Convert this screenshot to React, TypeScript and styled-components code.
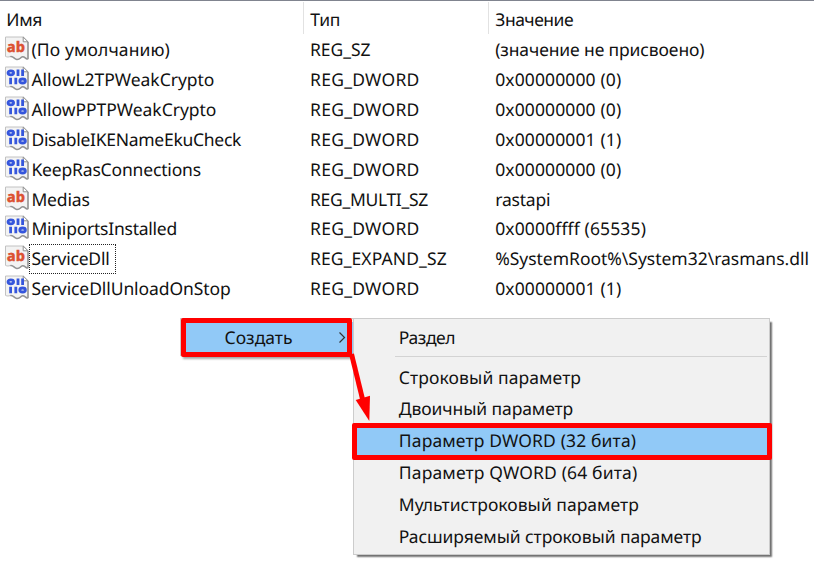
import React from 'react';
import styled, { createGlobalStyle } from 'styled-components';

const GlobalStyle = createGlobalStyle`
  * { box-sizing: border-box; }
  body {
    margin: 0;
    background: #fff;
    color: #111;
    font: 17.5px/24px "Noto Sans", "Open Sans", sans-serif;
    text-rendering: geometricPrecision;
  }
`;

const Window = styled.main`
  position: relative;
  width: 814px;
  height: 564px;
  overflow: hidden;
  background: #fff;
  border-top: 1px solid #80848f;
`;

const HeaderRow = styled.header`
  display: grid;
  grid-template-columns: 304px 185px 1fr;
  height: 33px;
  padding-top: 1px;
`;

const HeaderCell = styled.div`
  display: flex;
  align-items: center;
  padding: 3px 0 0 6.3px;
  border-right: 1px solid #e2e2e2;
  &:last-child { border-right: 0; }
`;

const List = styled.section`
  padding-top: 1.3px;
`;

const Row = styled.div`
  display: grid;
  grid-template-columns: 310px 185.2px 1fr;
  height: 29.88px;
  align-items: center;
`;

const NameCell = styled.div`
  display: flex;
  align-items: center;
  height: 29px;
  padding-left: 4px;
`;

const NameLabel = styled.div<{ $focused?: boolean }>`
  display: flex;
  align-items: center;
  height: 30px;
  padding: 0 5.5px 0 1.4px;
  border: 1px dotted ${(p) => (p.$focused ? '#222' : 'transparent')};
`;

const Label = styled.span<{ $ls: number }>`
  letter-spacing: ${(p) => p.$ls}px;
  white-space: pre;
`;

const IconSvg = styled.svg`
  flex: none;
  width: 25px;
  height: 25px;
  margin-top: -3px;
`;

const ParentMenu = styled.nav`
  position: absolute;
  left: 180px;
  top: 317px;
  width: 174px;
  height: 38px;
  padding-top: 3px;
  background: #f0f0f0;
  border: 1px solid #ccc;
  box-shadow: 3px 3px 2px rgba(0, 0, 0, 0.35);
`;

const ParentItem = styled.div`
  display: flex;
  align-items: center;
  justify-content: space-between;
  height: 32px;
  padding: 0 7px 0 43.5px;
  background: #91c9f7;
`;

const Submenu = styled.nav`
  position: absolute;
  left: 353px;
  top: 317px;
  width: 417px;
  height: 237px;
  padding: 3px 2px 4px 3px;
  background: #f1f1f1;
  border: 1px solid #ccc;
  box-shadow: 3px 3px 1.5px -1px rgba(0, 0, 0, 0.55);
  clip-path: inset(0 -6px -6px 0);
`;

const MenuItem = styled.div<{ $active?: boolean }>`
  display: flex;
  align-items: center;
  height: 31.85px;
  padding-left: 41.8px;
  background: ${(p) => (p.$active ? '#91c9f7' : 'transparent')};
`;

const Separator = styled.hr`
  height: 1px;
  margin: 2px 0 4.8px 37.5px;
  border: 0;
  background: #d3d3d3;
`;

const Highlight = styled.div<{ $x: number; $y: number; $w: number; $h: number }>`
  position: absolute;
  left: ${(p) => p.$x}px;
  top: ${(p) => p.$y}px;
  width: ${(p) => p.$w}px;
  height: ${(p) => p.$h}px;
  border: 5px solid #f00;
  border-radius: 2px;
`;

const Arrow = styled.svg`
  position: absolute;
  left: 344px;
  top: 349px;
`;

function ValueIcon({ kind }: { kind: 'text' | 'binary' }) {
  return (
    <IconSvg viewBox="0 0 25 25">
      <path
        d="M1.5 1H19.2L24 5.8V22.6C22 24.2 20.6 19.8 18.2 20.8C15.8 22 15.4 24 12.5 23.4C9.8 22.6 9.2 19.8 6.3 20.6C4.2 21 3.6 21.4 1.5 20.4Z"
        fill="#f3f3f3"
        stroke="#c2c2c2"
      />
      <path
        d="M24 5.8V22.6C22 24.2 20.6 19.8 18.2 20.8C15.8 22 15.4 24 12.5 23.4C9.8 22.6 9.2 19.8 6.3 20.6"
        fill="none"
        stroke="#949494"
        strokeWidth="1.5"
      />
      <path d="M19.2 1V5.8H24Z" fill="#fff" stroke="#8f8f8f" />
      {kind === 'text' ? (
        <text
          x="2.8"
          y="15.8"
          fill="#dc5233"
          stroke="#dc5233"
          strokeWidth="0.3"
          fontFamily="Noto Sans"
          fontWeight="800"
          fontSize="14.6"
          textLength="18.2"
          lengthAdjust="spacingAndGlyphs"
        >
          ab
        </text>
      ) : (
        <g fill="none" stroke="#3556dc" strokeWidth="2.8">
          <ellipse cx="6.8" cy="6.8" rx="2.8" ry="2" />
          <path d="M14 3.5V10.1M18.6 3.5V10.1M6.6 11.7V18.3M11.8 11.7V18.3" />
          <ellipse cx="18.6" cy="15" rx="2.8" ry="2" />
        </g>
      )}
    </IconSvg>
  );
}

type Text = [string, number];

interface RegistryValue {
  kind: 'text' | 'binary';
  name: Text;
  type: Text;
  data: Text;
  focused?: boolean;
}

const DWORD: Text = ['REG_DWORD', 0.28];

const values: RegistryValue[] = [
  { kind: 'text', name: ['(По умолчанию)', 0.12], type: ['REG_SZ', -0.03], data: ['(значение не присвоено)', -0.12] },
  { kind: 'binary', name: ['AllowL2TPWeakCrypto', -0.03], type: DWORD, data: ['0x00000000 (0)', 0.12] },
  { kind: 'binary', name: ['AllowPPTPWeakCrypto', -0.03], type: DWORD, data: ['0x00000000 (0)', 0.12] },
  { kind: 'binary', name: ['DisableIKENameEkuCheck', -0.28], type: DWORD, data: ['0x00000001 (1)', 0.12] },
  { kind: 'binary', name: ['KeepRasConnections', -0.17], type: DWORD, data: ['0x00000000 (0)', 0.12] },
  { kind: 'text', name: ['Medias', -0.15], type: ['REG_MULTI_SZ', -0.31], data: ['rastapi', -0.18] },
  { kind: 'binary', name: ['MiniportsInstalled', -0.24], type: DWORD, data: ['0x0000ffff (65535)', 0.13] },
  { kind: 'text', name: ['ServiceDll', -0.2], type: ['REG_EXPAND_SZ', 0.1], data: ['%SystemRoot%\\System32\\rasmans.dll', -0.02], focused: true },
  { kind: 'binary', name: ['ServiceDllUnloadOnStop', -0.09], type: DWORD, data: ['0x00000001 (1)', 0.12] },
];

const headers: Text[] = [['Имя', -0.33], ['Тип', -0.28], ['Значение', -0.5]];

const newItems: { text: Text; active?: boolean }[] = [
  { text: ['Строковый параметр', 0.09] },
  { text: ['Двоичный параметр', -0.1] },
  { text: ['Параметр DWORD (32 бита)', 0.14], active: true },
  { text: ['Параметр QWORD (64 бита)', 0.15] },
  { text: ['Мультистроковый параметр', 0.01] },
  { text: ['Расширяемый строковый параметр', -0.09] },
];

export default function App() {
  return (
    <>
      <GlobalStyle />
      <Window>
        <HeaderRow>
          {headers.map(([text, ls]) => (
            <HeaderCell key={text}>
              <Label $ls={ls}>{text}</Label>
            </HeaderCell>
          ))}
        </HeaderRow>
        <List>
          {values.map((v) => (
            <Row key={v.name[0]}>
              <NameCell>
                <ValueIcon kind={v.kind} />
                <NameLabel $focused={v.focused}>
                  <Label $ls={v.name[1]}>{v.name[0]}</Label>
                </NameLabel>
              </NameCell>
              <Label $ls={v.type[1]}>{v.type[0]}</Label>
              <Label $ls={v.data[1]}>{v.data[0]}</Label>
            </Row>
          ))}
        </List>
        <ParentMenu>
          <ParentItem>
            <Label $ls={0}>Создать</Label>
            <svg width="8" height="14" viewBox="0 0 8 14">
              <path d="M1.5 1.5L6.5 6.5L1.5 11.5" fill="none" stroke="#333" strokeWidth="1.2" />
            </svg>
          </ParentItem>
        </ParentMenu>
        <Submenu>
          <MenuItem>
            <Label $ls={-0.44}>Раздел</Label>
          </MenuItem>
          <Separator />
          {newItems.map(({ text, active }) => (
            <MenuItem key={text[0]} $active={active}>
              <Label $ls={text[1]}>{text[0]}</Label>
            </MenuItem>
          ))}
        </Submenu>
        <Highlight $x={181} $y={317} $w={171} $h={39} />
        <Highlight $x={352} $y={422} $w={420} $h={37} />
        <Arrow width="30" height="76" viewBox="0 0 30 76">
          <path d="M7.5 4L18.5 49" stroke="#f00" strokeWidth="5" />
          <path d="M11.7 50L26 45.7L25.3 71Z" fill="#f00" />
        </Arrow>
      </Window>
    </>
  );
}
